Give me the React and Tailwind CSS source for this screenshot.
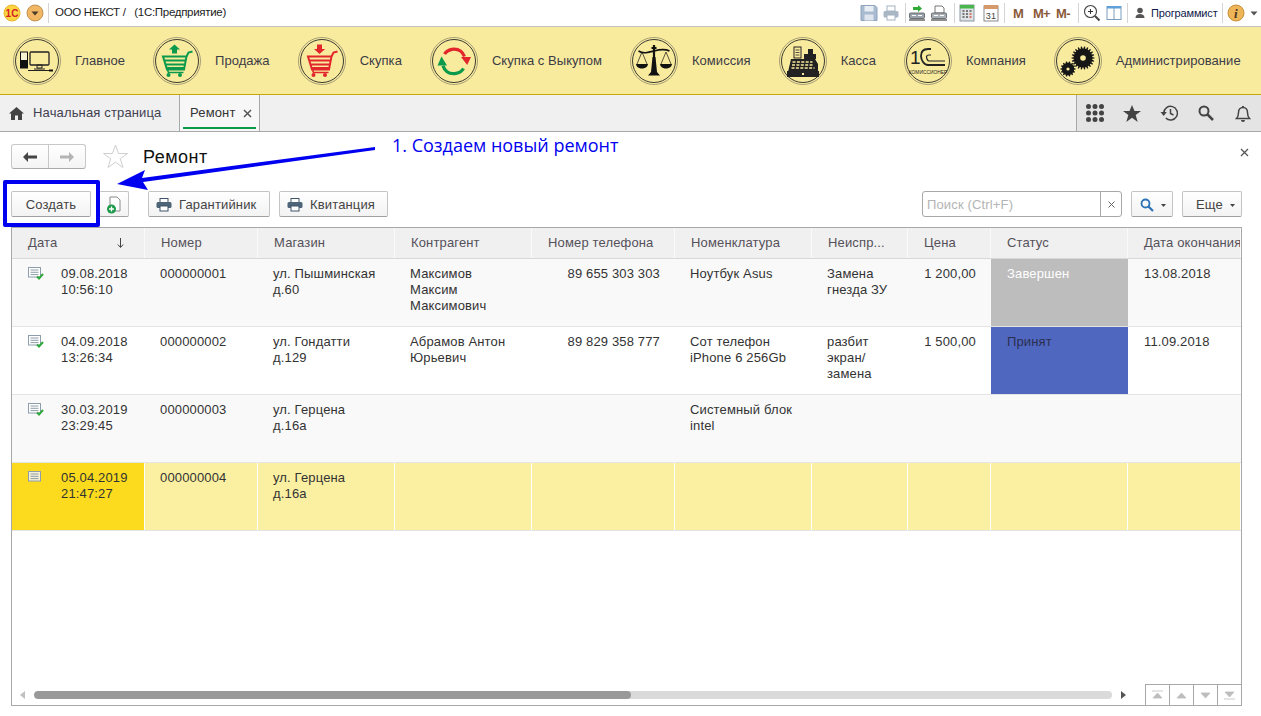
import React from "react";

const Ring = ({ children }) => (
  <svg width="48" height="48" viewBox="0 0 48 48" className="shrink-0">
    <circle cx="24" cy="24" r="23.5" fill="none" stroke="#a89f78" strokeWidth="1" />
    <circle cx="24" cy="24" r="21.5" fill="none" stroke="#3a3a30" strokeWidth="1" />
    {children}
  </svg>
);

const Computer = () => (
  <Ring>
    <rect x="7.500" y="15" width="7" height="16" fill="#f4f1d0" stroke="#111" strokeWidth="1" />
    <rect x="7.500" y="23" width="7" height="8" fill="#111" />
    <rect x="17" y="15" width="19" height="13" rx="1" fill="none" stroke="#222" strokeWidth="1.300" />
    <path d="M24 28h5v3h-5zM21 32h11" stroke="#222" strokeWidth="1" fill="none" />
    <path d="M15 33.500h21" stroke="#222" strokeWidth="1" />
    <rect x="36" y="32.500" width="4" height="2" fill="#111" />
  </Ring>
);

const Cart = ({ color, up }) => (
  <Ring>
    <path d="M10 19.500h23.500l-2.500 13H14zM11 23.500h21.500M12 27.500h20M13.500 31h17.500M33.500 19.500l2-4 4-1" fill="none" stroke={color} strokeWidth="2" />
    <path d="M14.500 33l1 2.500h15" fill="none" stroke={color} strokeWidth="1.600" />
    <circle cx="15.500" cy="38" r="2" fill={color} />
    <circle cx="27" cy="38" r="2" fill={color} />
    {up ? (
      <path d="M21.500 7.500l5.500 5h-3v4h-5v-4h-3z" fill={color} />
    ) : (
      <path d="M19 7.500h5v4.500h3.200l-5.700 5-5.500-5H19z" fill={color} />
    )}
  </Ring>
);

const Cycle = () => (
  <Ring>
    <path d="M14.500 17c3-5 11-6.500 16-3 2 1.500 3 3 4 5.500" fill="none" stroke="#e2262b" strokeWidth="3.200" />
    <path d="M31 20h10l-3.800 8z" fill="#e2262b" />
    <path d="M33.500 31.500c-3 5.200-11.500 6.800-16.500 3.200-2-1.500-3.200-3.500-4-6" fill="none" stroke="#0b9a4b" strokeWidth="3.200" />
    <path d="M7.500 28.500l4-9 5.500 9z" fill="#0b9a4b" />
  </Ring>
);

const Scales = () => (
  <Ring>
    <path d="M24 8v29M21.500 11h5" stroke="#111" strokeWidth="2.200" />
    <path d="M8.500 14c5 3 10 1.500 15.500 0s10.500-2.500 15.500 0" fill="none" stroke="#111" strokeWidth="1.600" />
    <path d="M12 15L7 27M12 15l5 12M36 15l-5 12M36 15l5 12" stroke="#111" strokeWidth=".7" />
    <path d="M6 27h12c-.5 6-11.500 6-12 0zM30 27h12c-.5 6-11.500 6-12 0z" fill="#111" />
    <path d="M22.500 20h3l1.500 15 3 3.500H18l3-3.500z" fill="#111" />
  </Ring>
);

const Register = () => (
  <Ring>
    <path d="M9 35l3-13h24l3 5v8z" fill="#222" />
    <rect x="8" y="34" width="32" height="6" fill="#222" />
    <rect x="23" y="36" width="2" height="2" fill="#f9eb9e" />
    <rect x="15" y="10" width="7" height="11" fill="#f9eb9e" stroke="#222" />
    <path d="M16.500 13h4M16.500 15.500h4M16.500 18h4" stroke="#222" strokeWidth=".8" />
    <path d="M25 17h12v5H25zM29 12h5v5h-5z" fill="#222" />
    <path d="M13.500 25h20M13 28h22M12.500 31h23" stroke="#f9eb9e" strokeWidth="1.300" strokeDasharray="3 1.400" />
  </Ring>
);

const OneC = () => (
  <Ring>
    <text x="6" y="27" fontFamily="'Liberation Sans',sans-serif" fontSize="19" fill="#222">1</text>
    <path d="M27 12h-3c-5 0-7 3-7 7s3 9 7 9h17" fill="none" stroke="#222" strokeWidth="1.800" />
    <path d="M27 18h-2c-1.500 0-2.500 1-2.500 2s1 4 2.500 4h16" fill="none" stroke="#222" strokeWidth="1.200" />
    <text x="24" y="36.500" textAnchor="middle" fontFamily="'Liberation Sans',sans-serif" fontSize="4.800" fill="#222">КОМИССИОНЕР</text>
  </Ring>
);

const gearPath = (cx, cy, r, n) => {
  let d = "";
  for (let i = 0; i < n; i++) {
    const a = (i * 2 * Math.PI) / n;
    const w = Math.PI / n / 1.6;
    const pts = [
      [a - w, r * 0.82],
      [a - w * 0.6, r],
      [a + w * 0.6, r],
      [a + w, r * 0.82],
    ];
    for (const [t, q] of pts) {
      d += `${d ? "L" : "M"}${(cx + q * Math.cos(t)).toFixed(2)} ${(cy + q * Math.sin(t)).toFixed(2)}`;
    }
  }
  return d + "Z";
};

const Gears = () => (
  <Ring>
    <path d={gearPath(29, 21, 11.500, 22)} fill="#161616" />
    <circle cx="29" cy="21" r="2.800" fill="#f9eb9e" />
    <path d={gearPath(14, 32, 7.500, 14)} fill="#161616" />
    <circle cx="14" cy="32" r="1.600" fill="#f9eb9e" />
  </Ring>
);

const menu = [
  ["Главное", <Computer />],
  ["Продажа", <Cart color="#0b9a4b" up />],
  ["Скупка", <Cart color="#e2262b" />],
  ["Скупка с Выкупом", <Cycle />],
  ["Комиссия", <Scales />],
  ["Касса", <Register />],
  ["Компания", <OneC />],
  ["Администрирование", <Gears />],
];

const Sep = () => <div className="w-px h-[20px] bg-[#d4d4d4] shrink-0" />;

const TopIcons = () => (
  <div className="flex items-center ml-auto h-full">
    <svg width="18" height="18" viewBox="0 0 18 18">
      <path d="M1 1.500h14l2 2v13H1z" fill="#a9bbd0" stroke="#8ea3bc" />
      <rect x="4.500" y="2" width="9" height="5.500" fill="#e9eef4" />
      <rect x="4.500" y="10.500" width="9" height="6" fill="#dfe6ee" />
    </svg>
    <svg width="18" height="18" viewBox="0 0 18 18" className="ml-[4px]">
      <rect x="5" y="2" width="8" height="5" fill="#fff" stroke="#a5b2c0" />
      <rect x="1.500" y="7" width="15" height="6.500" rx="1.500" fill="#a9b6c4" />
      <rect x="5" y="11" width="8" height="5" fill="#fff" stroke="#a5b2c0" />
    </svg>
    <div className="ml-[5px]"><Sep /></div>
    <svg width="18" height="18" viewBox="0 0 18 18" className="ml-[2px]">
      <path d="M5 3h5V1l4 3.500L10 8V6H5z" fill="#2eaa35" />
      <rect x="1.500" y="9" width="15" height="5.500" rx="1" fill="#9aa2ac" stroke="#555" strokeWidth=".8" />
      <path d="M4 11.500h4M10 11.500h4" stroke="#fff" strokeWidth="1.200" />
      <path d="M1 16h16" stroke="#444" strokeWidth="1.200" />
    </svg>
    <svg width="18" height="18" viewBox="0 0 18 18" className="ml-[4px]">
      <path d="M5 2h7l2 2v5H5z" fill="#fff" stroke="#666" strokeWidth=".9" />
      <rect x="1.500" y="9" width="15" height="5.500" rx="1" fill="#aab0b8" stroke="#555" strokeWidth=".8" />
      <path d="M4 11.500h4M10 11.500h4" stroke="#fff" strokeWidth="1.200" />
      <path d="M1 16h16" stroke="#444" strokeWidth="1.200" />
    </svg>
    <div className="ml-[6px]"><Sep /></div>
    <svg width="16" height="18" viewBox="0 0 16 18" className="ml-[4px]">
      <rect x="1" y="1" width="14" height="16" fill="#dfe3e6" stroke="#8a96a2" />
      <rect x="1" y="1" width="14" height="3.500" fill="#49b54d" />
      <path d="M3.500 7h2M7 7h2M10.500 7h2M3.500 10h2M7 10h2M3.500 13h2M7 13h2" stroke="#555" strokeWidth="1.400" />
      <path d="M10.500 10h2M10.500 13h2" stroke="#d05040" strokeWidth="1.400" />
    </svg>
    <svg width="16" height="18" viewBox="0 0 16 18" className="ml-[8px]">
      <rect x="1" y="2" width="14" height="15" fill="#fff" stroke="#8a8a8a" />
      <rect x="1" y="1" width="14" height="4" fill="#d69a6a" />
      <text x="8" y="14.500" textAnchor="middle" fontSize="9" fontFamily="'Liberation Sans',sans-serif" fill="#444">31</text>
    </svg>
    <div className="ml-[5px]"><Sep /></div>
    <span className="ml-[8px] w-[10px] text-[13px] tracking-[-0.5px] font-bold text-[#8a5a3a] leading-none">M</span>
    <span className="ml-[10px] w-[16px] text-[13px] tracking-[-0.8px] font-bold text-[#8a5a3a] leading-none whitespace-nowrap">M+</span>
    <span className="ml-[7px] w-[15px] text-[13px] tracking-[-0.5px] font-bold text-[#8a5a3a] leading-none whitespace-nowrap">M-</span>
    <div className="ml-[7px]"><Sep /></div>
    <svg width="18" height="18" viewBox="0 0 18 18" className="ml-[4px]">
      <circle cx="7.500" cy="7.500" r="6" fill="#fff" stroke="#444" strokeWidth="1.100" />
      <path d="M5 7.500h5M7.500 5v5" stroke="#333" />
      <path d="M12 12l4.500 4.500" stroke="#444" strokeWidth="2" />
    </svg>
    <svg width="16" height="16" viewBox="0 0 16 16" className="ml-[5px]">
      <rect x="1" y="1.500" width="14" height="13" fill="#fff" stroke="#7a9cbc" />
      <rect x="1" y="1" width="14" height="2.500" fill="#5fa0d8" />
      <path d="M8 3v11" stroke="#7a9cbc" />
    </svg>
    <div className="ml-[5px]"><Sep /></div>
    <svg width="12" height="12" viewBox="0 0 12 12" className="ml-[6px]">
      <circle cx="6" cy="3.500" r="2.800" fill="#555" />
      <path d="M1.500 11c0-3 2-4 4.500-4s4.500 1 4.500 4z" fill="#555" />
    </svg>
    <span className="ml-[5px] w-[67px] text-[11px] tracking-[-0.15px] text-[#10204a] whitespace-nowrap">Программист</span>
    <div className="ml-[4px]"><Sep /></div>
    <svg width="18" height="18" viewBox="0 0 18 18" className="ml-[4px]">
      <circle cx="9" cy="9" r="8" fill="#eeb458" stroke="#c98f3a" />
      <text x="9" y="14" textAnchor="middle" fontSize="13" fontWeight="bold" fontStyle="italic" fontFamily="'Liberation Serif',serif" fill="#4a3520">i</text>
    </svg>
    <svg width="8" height="5" viewBox="0 0 8 5" className="ml-[5px] mr-[3px]"><path d="M.5 .5h7L4 4.500z" fill="#555" /></svg>
  </div>
);

const Btn = ({ children, className = "" }) => (
  <div className={`h-[26px] flex items-center pt-[2px] bg-gradient-to-b from-white to-[#f3f3f3] border border-[#c4c4c4] border-b-[#a0a0a0] rounded-[2px] text-[13px] text-[#444] shrink-0 ${className}`}>
    {children}
  </div>
);

const Printer = () => (
  <svg width="16" height="14" viewBox="0 0 16 14">
    <rect x="4" y="0.500" width="8" height="4" fill="#fff" stroke="#3f5468" />
    <rect x="0.500" y="4" width="15" height="6" rx="1.500" fill="#4d6479" />
    <rect x="4" y="8" width="8" height="5" fill="#fff" stroke="#3f5468" />
  </svg>
);

const cols = [133, 113, 137, 137, 143, 137, 96, 83, 137, 113];
const heads = ["Дата", "Номер", "Магазин", "Контрагент", "Номер телефона", "Номенклатура", "Неиспр...", "Цена", "Статус", "Дата окончания"];

const rows = [
  { date: "09.08.2018\n10:56:10", num: "000000001", shop: "ул. Пышминская\nд.60", who: "Максимов\nМаксим\nМаксимович", tel: "89 655 303 303", item: "Ноутбук Asus", fault: "Замена\nгнезда ЗУ", price: "1 200,00", status: "Завершен", statusCls: "bg-[#bdbdbd] text-white pl-[16px]", end: "13.08.2018", bg: "bg-[#f9f9f9]", done: true },
  { date: "04.09.2018\n13:26:34", num: "000000002", shop: "ул. Гондатти\nд.129", who: "Абрамов Антон\nЮрьевич", tel: "89 829 358 777", item: "Сот телефон\niPhone 6 256Gb", fault: "разбит\nэкран/\nзамена", price: "1 500,00", status: "Принят", statusCls: "bg-[#5067c0] text-[#2a2f50] pl-[16px]", end: "11.09.2018", bg: "bg-white", done: true },
  { date: "30.03.2019\n23:29:45", num: "000000003", shop: "ул. Герцена\nд.16а", who: "", tel: "", item: "Системный блок\nintel", fault: "", price: "", status: "", statusCls: "", end: "", bg: "bg-[#f9f9f9]", done: true },
  { date: "05.04.2019\n21:47:27", num: "000000004", shop: "ул. Герцена\nд.16а", who: "", tel: "", item: "", fault: "", price: "", status: "", statusCls: "", end: "", bg: "bg-[#fbf0a2]", sel: true },
];

const DocIcon = ({ done }) => (
  <svg width="16" height="13" viewBox="0 0 16 13" className="absolute left-[16px] top-[8px]">
    <rect x="0.500" y="0.500" width="12" height="9.500" fill={done ? "#fff" : "#f4f0d8"} stroke="#8e9dab" />
    <path d="M2.500 3h8M2.500 5.300h8M2.500 7.600h8" stroke="#8e9dab" />
    {done && <path d="M9 9.500l2 2 4-4.500" fill="none" stroke="#2ea83c" strokeWidth="2" />}
  </svg>
);

const Cell = ({ w, className = "", children }) => (
  <div style={{ width: w }} className={`shrink-0 pt-[7px] pl-[15px] pr-[5px] leading-[16px] whitespace-pre overflow-hidden ${className}`}>
    {children}
  </div>
);

export default function App() {
  return (
    <div className="relative w-[1261px] h-[716px] overflow-hidden bg-white flex flex-col font-[Liberation_Sans,Arial,sans-serif] text-[13px] tracking-[0.15px] text-[#333]">
      {/* title bar */}
      <div className="h-[27px] border-b border-[#c0c0c0] flex items-center shrink-0 pr-0">
        <svg width="18" height="18" viewBox="0 0 18 18" className="ml-[3px]">
          <circle cx="9" cy="9" r="8" fill="#fbd540" stroke="#e8b530" />
          <text x="9" y="13" textAnchor="middle" fontSize="10" fontWeight="bold" fontFamily="'Liberation Sans',sans-serif" fill="#d8202a">1С</text>
        </svg>
        <svg width="18" height="18" viewBox="0 0 18 18" className="ml-[5px]">
          <circle cx="9" cy="9" r="8" fill="#f2b765" stroke="#bd9350" />
          <path d="M5.500 7.500h7L9 11.500z" fill="#4a3a28" />
        </svg>
        <div className="ml-[4px]"><Sep /></div>
        <span className="ml-[6px] text-[11.5px] tracking-[-0.3px] text-[#222] whitespace-pre">ООО НЕКСТ /   (1С:Предприятие)</span>
        <TopIcons />
      </div>

      {/* sections */}
      <nav className="h-[68px] bg-[#f9eb9e] border-b border-[#c4a80e] flex items-center pl-[13px] shrink-0 tracking-[0.05px]">
        {menu.map(([label, icon]) => (
          <div key={label} className="flex items-center gap-[14px] mr-[28px] whitespace-nowrap text-[#3c3c46]">
            {icon}
            <span>{label}</span>
          </div>
        ))}
      </nav>

      {/* tabs */}
      <div className="h-[37px] bg-[#f0f0f0] border-b border-[#a8a8a8] flex shrink-0">
        <div className="w-[180px] border-r border-[#a8a8a8] flex items-center pl-[9px] shrink-0 text-[#404050]">
          <svg width="15" height="13" viewBox="0 0 15 13">
            <path d="M7.500 0L15 6.500h-2V13H9V8.500H6V13H2V6.500H0z" fill="#444" />
          </svg>
          <span className="ml-[9px]">Начальная страница</span>
        </div>
        <div className="w-[80px] border-r border-[#a8a8a8] bg-[#f7f7f7] relative flex items-center pl-[10px] shrink-0">
          <span>Ремонт</span>
          <svg width="9" height="9" viewBox="0 0 9 9" className="ml-[7px]"><path d="M1 1l7 7M8 1l-7 7" stroke="#555" strokeWidth="1.500" /></svg>
          <div className="absolute left-[3px] right-[3px] bottom-[2px] h-[2px] bg-[#0a9a4a]" />
        </div>
        <div className="ml-auto w-[185px] bg-[#e4e4e4] border-l border-[#a8a8a8] flex items-center pl-[9px]">
          <svg width="18" height="18" viewBox="0 0 18 18">
            {[2.500, 9, 15.500].map((y) => [2.500, 9, 15.500].map((x) => <circle key={`${x}${y}`} cx={x} cy={y} r="2.500" fill="#444" />))}
          </svg>
          <svg width="18" height="17" viewBox="0 0 18 17" className="ml-[19px]"><path d="M9 0l2.500 6H18l-5.300 4 2 7L9 12.800 3.300 17l2-7L0 6h6.500z" fill="#444" /></svg>
          <svg width="18" height="16" viewBox="0 0 18 16" className="ml-[19px]">
            <path d="M3.800 8a6.800 6.800 0 1 1 2 5" fill="none" stroke="#444" strokeWidth="1.500" />
            <path d="M0.500 7h6.300L3.700 11z" fill="#444" />
            <path d="M10.500 4v4.500l3 1.500" fill="none" stroke="#444" strokeWidth="1.500" />
          </svg>
          <svg width="16" height="16" viewBox="0 0 16 16" className="ml-[20px]">
            <circle cx="6" cy="6" r="4.500" fill="none" stroke="#444" strokeWidth="2" />
            <path d="M9.500 9.500L15 15" stroke="#444" strokeWidth="2.500" />
          </svg>
          <svg width="16" height="17" viewBox="0 0 16 17" className="ml-[21px]">
            <path d="M1.500 13.500c1.500-1.500 2-3 2-6 0-3 2-5 4.500-5s4.500 2 4.500 5c0 3 .5 4.500 2 6z" fill="none" stroke="#444" strokeWidth="1.500" />
            <path d="M6 15h4a2 2 0 0 1-4 0zM7 2h2V1H7z" fill="#444" />
          </svg>
        </div>
      </div>

      {/* form header */}
      <div className="h-[59px] flex items-start pt-[12px] pl-[11px] pr-[11px] shrink-0 relative">
        <div className="h-[25px] w-[75px] flex border border-[#c8c8c8] border-b-[#aaa] rounded-[3px] bg-gradient-to-b from-white to-[#f4f4f4] shrink-0">
          <div className="w-[37px] border-r border-[#c8c8c8] flex items-center justify-center">
            <svg width="14" height="10" viewBox="0 0 14 10"><path d="M0 5l5-5v3.500h9v3H5v3.500z" fill="#444" /></svg>
          </div>
          <div className="flex-1 flex items-center justify-center">
            <svg width="14" height="10" viewBox="0 0 14 10"><path d="M14 5L9 0v3.500H0v3h9V10z" fill="#b4b4b4" /></svg>
          </div>
        </div>
        <svg width="25" height="24" viewBox="0 0 25 24" className="ml-[17px] shrink-0">
          <path d="M12.500 1l3 8.500h9l-7.200 5.300 2.700 8.700-7.500-5.300L5 23.500l2.700-8.700L.5 9.500h9z" fill="none" stroke="#cfcfcf" />
        </svg>
        <span className="ml-[15px] text-[18px] tracking-[0.5px] leading-[24px] text-[#111] mt-[1px]">Ремонт</span>
        <svg width="9" height="9" viewBox="0 0 9 9" className="ml-auto mr-[1px] mt-[4px]"><path d="M1 1l7 7M8 1l-7 7" stroke="#555" strokeWidth="1.300" /></svg>
      </div>

      {/* command bar */}
      <div className="h-[36px] flex items-start pl-[11px] pr-[19px] shrink-0">
        <Btn className="w-[80px] justify-center border-[#777] border-b-[#666]">Создать</Btn>
        <Btn className="w-[30px] ml-[8px] justify-center">
          <svg width="16" height="18" viewBox="0 0 16 18">
            <path d="M4 1h7l3 3v11H4z" fill="#fff" stroke="#8a8a8a" />
            <circle cx="5.500" cy="13" r="4.500" fill="#1a9a4a" />
            <path d="M3 13h5M5.500 10.500v5" stroke="#fff" strokeWidth="1.400" />
          </svg>
        </Btn>
        <Btn className="w-[122px] ml-[19px] pl-[7px]">
          <Printer />
          <span className="ml-[7px]">Гарантийник</span>
        </Btn>
        <Btn className="w-[109px] ml-[9px] pl-[7px]">
          <Printer />
          <span className="ml-[7px]">Квитанция</span>
        </Btn>
        <div className="ml-auto h-[26px] w-[200px] flex border border-[#a8a8a8] rounded-[3px] bg-white shrink-0">
          <span className="flex-1 pl-[4px] leading-[26px] text-[#b4b4b4]">Поиск (Ctrl+F)</span>
          <div className="w-[21px] border-l border-[#a8a8a8] flex items-center justify-center">
            <svg width="7" height="7" viewBox="0 0 7 7"><path d="M.5 .5l6 6M6.500 .5l-6 6" stroke="#666" /></svg>
          </div>
        </div>
        <Btn className="w-[42px] ml-[9px] pl-[8px]">
          <svg width="14" height="14" viewBox="0 0 14 14">
            <circle cx="5.500" cy="5.500" r="4" fill="none" stroke="#2a72b5" strokeWidth="1.800" />
            <path d="M8.500 8.500L13 13" stroke="#2a72b5" strokeWidth="2.200" />
          </svg>
          <svg width="5" height="3" viewBox="0 0 5 3" className="ml-[7px]"><path d="M0 0h5L2.500 3z" fill="#444" /></svg>
        </Btn>
        <Btn className="w-[60px] ml-[9px] pl-[13px]">
          <span>Еще</span>
          <svg width="5" height="3" viewBox="0 0 5 3" className="ml-[7px]"><path d="M0 0h5L2.500 3z" fill="#444" /></svg>
        </Btn>
      </div>

      {/* table */}
      <div className="ml-[11px] w-[1231px] h-[479px] border border-[#a8a8a8] flex flex-col shrink-0 overflow-hidden">
        <div className="h-[31px] flex bg-[#f0f0f0] border-b border-[#d8d8d8] shrink-0">
          {heads.map((h, i) => (
            <div key={h} style={{ width: cols[i] }} className="relative shrink-0 border-r border-[#fafafa] pl-[16px] leading-[29px] whitespace-nowrap overflow-hidden text-[#55505a]">
              {h}
              {i === 0 && (
                <svg width="7" height="10" viewBox="0 0 7 10" className="absolute left-[105px] top-[10px]"><path d="M3.500 0v9M.8 6.500l2.700 3 2.700-3" fill="none" stroke="#444" /></svg>
              )}
            </div>
          ))}
        </div>
        {rows.map((r) => (
          <div key={r.num} className={`h-[68px] flex border-b border-[#e4e4e4] shrink-0 ${r.bg}`}>
            <Cell w={cols[0]} className={`relative pl-[49px] ${r.sel ? "bg-[#fcdb1e] border-r border-white" : ""}`}>
              <DocIcon done={r.done} />
              {r.date}
            </Cell>
            {[
              [1, r.num, ""],
              [2, r.shop, ""],
              [3, r.who, ""],
              [4, r.tel, "text-right pr-[15px]"],
              [5, r.item, ""],
              [6, r.fault, ""],
              [7, r.price, "text-right pr-[15px]"],
              [8, r.status, r.statusCls],
              [9, r.end, "pl-[16px]"],
            ].map(([i, t, c]) => (
              <Cell key={i} w={cols[i]} className={`${c} ${r.sel ? "border-r border-white" : ""}`}>{t}</Cell>
            ))}
          </div>
        ))}
        <div className="flex-1" />
        <div className="h-[21px] flex items-center shrink-0">
          <svg width="5" height="8" viewBox="0 0 5 8" className="ml-[8px]"><path d="M5 0v8L0 4z" fill="#c0c0c0" /></svg>
          <div className="ml-[9px] w-[1078px] h-[8px] rounded-[4px] bg-[#dadada] overflow-hidden shrink-0">
            <div className="w-[597px] h-full rounded-[4px] bg-[#999]" />
          </div>
          <svg width="5" height="8" viewBox="0 0 5 8" className="ml-[9px]"><path d="M0 0v8l5-4z" fill="#555" /></svg>
          <div className="ml-auto flex h-full border-t border-[#a8a8a8]">
            {[
              "M2 1h11M7.500 3L12 8H3z",
              "M7.500 3L12 8H3z",
              "M3 3h9L7.500 8z",
              "M3 2h9L7.500 7zM2 9h11",
            ].map((d) => (
              <div key={d} className="w-[24px] border-l border-[#a8a8a8] flex items-center justify-center">
                <svg width="15" height="10" viewBox="0 0 15 10"><path d={d} fill="#bdbdbd" stroke="#bdbdbd" strokeWidth=".8" /></svg>
              </div>
            ))}
          </div>
        </div>
      </div>

      {/* annotation overlay */}
      <div className="absolute left-[3px] top-[180px] w-[97px] h-[47px] border-[4px] border-[#0000f0] rounded-[2px]" />
      <svg width="270" height="50" viewBox="0 0 270 50" className="absolute left-[112px] top-[144px]">
        <path d="M5 40L33 26l-3 8 233-31v3L31 38l5 8z" fill="#0000f0" />
      </svg>
      <span className="absolute left-[392px] top-[134px] text-[18px] tracking-normal leading-[23px] text-[#0000f0] font-[Open_Sans,sans-serif] whitespace-nowrap">1. Создаем новый ремонт</span>
    </div>
  );
}
